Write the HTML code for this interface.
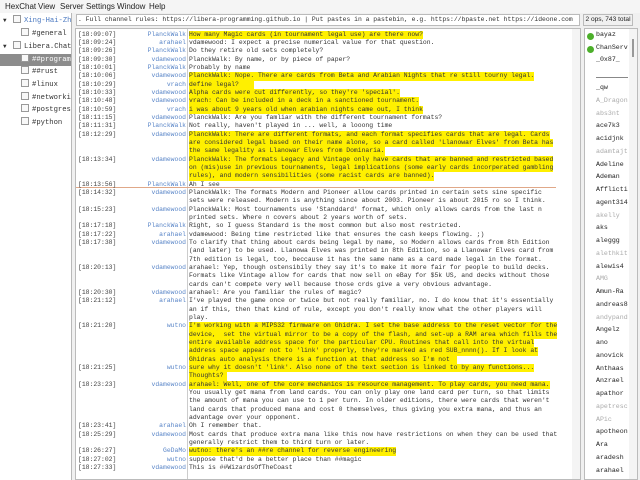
<!DOCTYPE html>
<html><head><meta charset="utf-8"><style>
*{margin:0;padding:0;box-sizing:border-box}
body{width:640px;height:480px;background:#f0f0f0;position:relative;overflow:hidden;font-family:"Liberation Mono",monospace;color:#333}
.menu{position:absolute;top:0;left:0;width:640px;height:13px;font:8px "Liberation Sans",sans-serif;color:#222;background:#f5f5f5}
.menu span{position:absolute;top:2px}
.tree{position:absolute;left:0;top:13px;width:72px;height:467px;background:#fff;border-right:1px solid #b8b8b8;font-size:7.2px;overflow:hidden}
.ti{position:absolute;height:12px;line-height:12px;white-space:nowrap;left:0;width:72px}
.ic{display:inline-block;width:8px;height:8px;border:1px solid #999;background:#f8f8f8;vertical-align:-1px;margin-right:3px}
.arrow{position:absolute;left:3px;font-size:6px;color:#333}
.topic{position:absolute;left:76px;top:14px;width:504px;height:12px;background:#fff;border:1px solid #bbb;font-size:6.4px;line-height:10px;white-space:nowrap;overflow:hidden;padding-left:1px}
.ops{position:absolute;left:583px;top:14px;width:50px;height:12px;border:1px solid #bbb;background:#f0f0f0;font:6.6px "Liberation Sans",sans-serif;line-height:10px;text-align:center;color:#222}
.chat{position:absolute;left:75px;top:28px;width:506px;height:452px;background:#fff;border:1px solid #bbb;overflow:hidden}
.sep{position:absolute;left:111px;top:0;bottom:0;width:1px;background:#ccc}
.sb{position:absolute;right:0;top:0;bottom:0;width:8px;background:#f4f4f4}
.r{position:absolute;left:0;height:8.33px;line-height:8.33px;font-size:6.4px;white-space:pre;width:500px}
.r .t{position:absolute;left:2px;color:#444}
.r .n{position:absolute;left:40px;width:70px;text-align:right;color:#5a86c8}
.r .m{position:absolute;left:113px;color:#333}
.h{background:#fff000}
.marker{position:absolute;left:0;width:480px;top:158px;height:1px;background:#e0a888}
.ul{position:absolute;left:584px;top:28px;width:54px;height:452px;background:#fff;border:1px solid #bbb;overflow:hidden}
.u{position:absolute;left:11px;font-size:6.6px;height:12px;line-height:12px;color:#222;white-space:nowrap}
.g{color:#aaa}
.dot{position:absolute;left:2px;width:7px;height:7px;border-radius:50%;background:#4caf2a}
.usb{position:absolute;right:0;top:0;bottom:0;width:8px;background:#f4f4f4}
</style></head><body>
<div class="menu"><span style="left:5px">HexChat</span><span style="left:38px">View</span><span style="left:60px">Server</span><span style="left:86px">Settings</span><span style="left:117px">Window</span><span style="left:149px">Help</span></div>
<div class="tree">
<div class="ti" style="top:2px"><span class="arrow">▼</span><span style="position:absolute;left:13px;color:#4a78c0"><span class="ic"></span>Xing-Hai-Zhan</span></div>
<div class="ti" style="top:15px"><span style="position:absolute;left:21px"><span class="ic"></span>#general</span></div>
<div class="ti" style="top:28px"><span class="arrow">▼</span><span style="position:absolute;left:13px"><span class="ic"></span>Libera.Chat</span></div>
<div class="ti" style="top:41px;background:#8c8c8c;color:#fff"><span style="position:absolute;left:21px"><span class="ic"></span>##programming</span></div>
<div class="ti" style="top:53px"><span style="position:absolute;left:21px"><span class="ic"></span>##rust</span></div>
<div class="ti" style="top:66px"><span style="position:absolute;left:21px"><span class="ic"></span>#linux</span></div>
<div class="ti" style="top:79px"><span style="position:absolute;left:21px"><span class="ic"></span>#networking</span></div>
<div class="ti" style="top:91px"><span style="position:absolute;left:21px"><span class="ic"></span>#postgresql</span></div>
<div class="ti" style="top:104px"><span style="position:absolute;left:21px"><span class="ic"></span>#python</span></div>
</div>
<div class="topic">. Full channel rules: https://libera-programming.github.io | Put pastes in a pastebin, e.g. https://bpaste.net https://ideone.com</div>
<div class="ops">2 ops, 743 total</div>
<div class="chat">
<div class="sep"></div>
<div class="marker"></div>
<div class="r" style="top:1.8px"><span class="t">[18:09:07]</span><span class="n">PlanckWalk</span><span class="m h">How many Magic cards (in tournament legal use) are there now?</span></div>
<div class="r" style="top:10.13px"><span class="t">[18:09:24]</span><span class="n">arahael</span><span class="m">vdamewood: I expect a precise numerical value for that question.</span></div>
<div class="r" style="top:18.46px"><span class="t">[18:09:26]</span><span class="n">PlanckWalk</span><span class="m">Do they retire old sets completely?</span></div>
<div class="r" style="top:26.79px"><span class="t">[18:09:30]</span><span class="n">vdamewood</span><span class="m">PlanckWalk: By name, or by piece of paper?</span></div>
<div class="r" style="top:35.12px"><span class="t">[18:10:01]</span><span class="n">PlanckWalk</span><span class="m">Probably by name</span></div>
<div class="r" style="top:43.45px"><span class="t">[18:10:06]</span><span class="n">vdamewood</span><span class="m h">PlanckWalk: Nope. There are cards from Beta and Arabian Nights that re still tourny legal.</span></div>
<div class="r" style="top:51.78px"><span class="t">[18:10:29]</span><span class="n">vrach</span><span class="m h">define legal?    </span></div>
<div class="r" style="top:60.11px"><span class="t">[18:10:33]</span><span class="n">vdamewood</span><span class="m h">Alpha cards were cut differently, so they're 'special'.</span></div>
<div class="r" style="top:68.44px"><span class="t">[18:10:48]</span><span class="n">vdamewood</span><span class="m h">vrach: Can be included in a deck in a sanctioned tournament.</span></div>
<div class="r" style="top:76.77px"><span class="t">[18:10:59]</span><span class="n">vrach</span><span class="m h">i was about 9 years old when arabian nights came out, I think</span></div>
<div class="r" style="top:85.1px"><span class="t">[18:11:15]</span><span class="n">vdamewood</span><span class="m">PlanckWalk: Are you famliar with the different tournament formats?</span></div>
<div class="r" style="top:93.43px"><span class="t">[18:11:31]</span><span class="n">PlanckWalk</span><span class="m">Not really, haven't played in ... well, a looong time</span></div>
<div class="r" style="top:101.76px"><span class="t">[18:12:29]</span><span class="n">vdamewood</span><span class="m h">PlanckWalk: There are different formats, and each format specifies cards that are legal. Cards</span></div>
<div class="r" style="top:110.09px"><span class="m h">are considered legal based on their name alone, so a card called 'Llanowar Elves' from Beta has</span></div>
<div class="r" style="top:118.42px"><span class="m h">the same legality as Llanowar Elves from Dominaria.</span></div>
<div class="r" style="top:126.75px"><span class="t">[18:13:34]</span><span class="n">vdamewood</span><span class="m h">PlanckWalk: The formats Legacy and Vintage only have cards that are banned and restricted based</span></div>
<div class="r" style="top:135.08px"><span class="m h">on (mis)use in previous tournaments, legal implications (some early cards incorperated gambling</span></div>
<div class="r" style="top:143.41px"><span class="m h">rules), and modern sensibilities (some racist cards are banned).</span></div>
<div class="r" style="top:151.74px"><span class="t">[18:13:56]</span><span class="n">PlanckWalk</span><span class="m">Ah I see</span></div>
<div class="r" style="top:160.07px"><span class="t">[18:14:32]</span><span class="n">vdamewood</span><span class="m">PlanckWalk: The formats Modern and Pioneer allow cards printed in certain sets sine specific</span></div>
<div class="r" style="top:168.4px"><span class="m">sets were released. Modern is anything since about 2003. Pioneer is about 2015 ro so I think.</span></div>
<div class="r" style="top:176.73px"><span class="t">[18:15:23]</span><span class="n">vdamewood</span><span class="m">PlanckWalk: Most tournaments use 'Standdard' format, which only allows cards from the last n</span></div>
<div class="r" style="top:185.06px"><span class="m">printed sets. Where n covers about 2 years worth of sets.</span></div>
<div class="r" style="top:193.39px"><span class="t">[18:17:18]</span><span class="n">PlanckWalk</span><span class="m">Right, so I guess Standard is the most common but also most restricted.</span></div>
<div class="r" style="top:201.72px"><span class="t">[18:17:22]</span><span class="n">arahael</span><span class="m">vdamewood: Being time restricted like that ensures the cash keeps flowing. ;)</span></div>
<div class="r" style="top:210.05px"><span class="t">[18:17:38]</span><span class="n">vdamewood</span><span class="m">To clarify that thing about cards being legal by name, so Modern allows cards from 8th Edition</span></div>
<div class="r" style="top:218.38px"><span class="m">(and later) to be used. Llanowa Elves was printed in 8th Edition, so a Llanowar Elves card from</span></div>
<div class="r" style="top:226.71px"><span class="m">7th edition is legal, too, beccause it has the same name as a card made legal in the format.</span></div>
<div class="r" style="top:235.04px"><span class="t">[18:20:13]</span><span class="n">vdamewood</span><span class="m">arahael: Yep, though ostensibily they say it's to make it more fair for people to build decks.</span></div>
<div class="r" style="top:243.37px"><span class="m">Formats like Vintage allow for cards that now sell on eBay for $5k US, and decks without those</span></div>
<div class="r" style="top:251.7px"><span class="m">cards can't compete very well because those crds give a very obvious advantage.</span></div>
<div class="r" style="top:260.03px"><span class="t">[18:20:30]</span><span class="n">vdamewood</span><span class="m">arahael: Are you familiar the rules of magic?</span></div>
<div class="r" style="top:268.36px"><span class="t">[18:21:12]</span><span class="n">arahael</span><span class="m">I've played the game once or twice but not really familiar, no. I do know that it's essentially</span></div>
<div class="r" style="top:276.69px"><span class="m">an if this, then that kind of rule, except you don't really know what the other players will</span></div>
<div class="r" style="top:285.02px"><span class="m">play.</span></div>
<div class="r" style="top:293.35px"><span class="t">[18:21:20]</span><span class="n">wutno</span><span class="m h">I'm working with a MIPS32 firmware on Ghidra. I set the base address to the reset vector for the</span></div>
<div class="r" style="top:301.68px"><span class="m h">device,  set the virtual mirror to be a copy of the flash, and set-up a RAM area which fills the</span></div>
<div class="r" style="top:310.01px"><span class="m h">entire available address space for the particular CPU. Routines that call into the virtual</span></div>
<div class="r" style="top:318.34px"><span class="m h">address space appear not to 'link' properly, they're marked as red SUB_nnnn(). If I look at</span></div>
<div class="r" style="top:326.67px"><span class="m h">Ghidras auto analysis there is a function at that address so I'm not  </span></div>
<div class="r" style="top:335px"><span class="t">[18:21:25]</span><span class="n">wutno</span><span class="m h">sure why it doesn't 'link'. Also none of the text section is linked to by any functions...</span></div>
<div class="r" style="top:343.33px"><span class="m h">Thoughts? </span></div>
<div class="r" style="top:351.66px"><span class="t">[18:23:23]</span><span class="n">vdamewood</span><span class="m h">arahael: Well, one of the core mechanics is resource management. To play cards, you need mana.</span></div>
<div class="r" style="top:359.99px"><span class="m">You usually get mana from land cards. You can only play one land card per turn, so that limits</span></div>
<div class="r" style="top:368.32px"><span class="m">the amount of mana you can use to 1 per turn. In older editions, there were cards that weren't</span></div>
<div class="r" style="top:376.65px"><span class="m">land cards that produced mana and cost 0 themselves, thus giving you extra mana, and thus an</span></div>
<div class="r" style="top:384.98px"><span class="m">advantage over your opponent.</span></div>
<div class="r" style="top:393.31px"><span class="t">[18:23:41]</span><span class="n">arahael</span><span class="m">Oh I remember that.</span></div>
<div class="r" style="top:401.64px"><span class="t">[18:25:29]</span><span class="n">vdamewood</span><span class="m">Most cards that produce extra mana like this now have restrictions on when they can be used that</span></div>
<div class="r" style="top:409.97px"><span class="m">generally restrict them to third turn or later.</span></div>
<div class="r" style="top:418.3px"><span class="t">[18:26:27]</span><span class="n">GeDaMo</span><span class="m h">wutno: there's an ##re channel for reverse engineering</span></div>
<div class="r" style="top:426.63px"><span class="t">[18:27:02]</span><span class="n">wutno</span><span class="m">suppose that'd be a better place than ##magic</span></div>
<div class="r" style="top:434.96px"><span class="t">[18:27:33]</span><span class="n">vdamewood</span><span class="m">This is ##WizardsOfTheCoast</span></div>
<div class="sb"></div>
</div>
<div class="ul">
<div class="dot" style="top:4px"></div><div class="u" style="top:0px">bayaz</div>
<div class="dot" style="top:17px"></div><div class="u" style="top:13px">ChanServ</div>
<div class="u" style="top:25px">_0x87_</div>
<div style="position:absolute;left:11px;top:48px;width:32px;height:1px;background:#888"></div>
<div class="u" style="top:53px">_qw</div>
<div class="u g" style="top:66px">A_Dragon</div>
<div class="u g" style="top:79px">abs3nt</div>
<div class="u" style="top:91px">ace7k3</div>
<div class="u" style="top:104px">acidjnk</div>
<div class="u g" style="top:117px">adamtajt</div>
<div class="u" style="top:130px">Adeline</div>
<div class="u" style="top:142px">Ademan</div>
<div class="u" style="top:155px">Afflicti</div>
<div class="u" style="top:168px">agent314</div>
<div class="u g" style="top:181px">akelly</div>
<div class="u" style="top:193px">aks</div>
<div class="u" style="top:206px">aleggg</div>
<div class="u g" style="top:219px">alethkit</div>
<div class="u" style="top:232px">alewis4</div>
<div class="u g" style="top:244px">AMG</div>
<div class="u" style="top:257px">Amun-Ra</div>
<div class="u" style="top:270px">andreas8</div>
<div class="u g" style="top:283px">andypand</div>
<div class="u" style="top:295px">Angelz</div>
<div class="u" style="top:308px">ano</div>
<div class="u" style="top:321px">anovick</div>
<div class="u" style="top:334px">Anthaas</div>
<div class="u" style="top:346px">Anzrael</div>
<div class="u" style="top:359px">apathor</div>
<div class="u g" style="top:372px">apetresc</div>
<div class="u g" style="top:385px">APic</div>
<div class="u" style="top:397px">apotheon</div>
<div class="u" style="top:410px">Ara</div>
<div class="u" style="top:423px">aradesh</div>
<div class="u" style="top:436px">arahael</div>
<div class="usb"><div style="position:absolute;left:3px;top:10px;width:2px;height:18px;background:#999"></div></div>
</div>
</body></html>
